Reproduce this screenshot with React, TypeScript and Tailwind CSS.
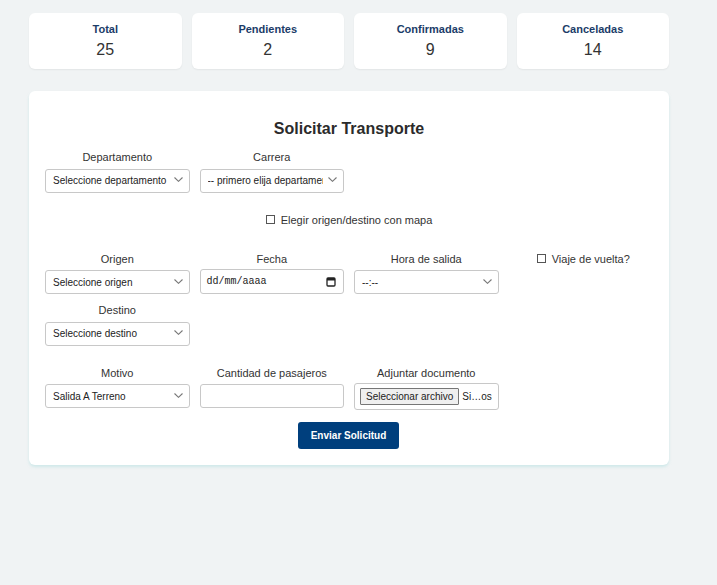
import React from 'react';

const stats = [
  { label: 'Total', value: 25 },
  { label: 'Pendientes', value: 2 },
  { label: 'Confirmadas', value: 9 },
  { label: 'Canceladas', value: 14 },
];

const fieldBox =
  'w-full h-[24px] border border-[#c8c8c8] rounded-[3px] bg-white text-[10px] text-[#222] pl-[7px]';

function Label({ children }: { children: React.ReactNode }) {
  return <div className="text-center text-[11px] leading-[14px] text-[#333] mb-[3px]">{children}</div>;
}

function Select({ value }: { value: string }) {
  return (
    <div className="relative">
      <select className={fieldBox + ' appearance-none pr-[20px]'} defaultValue={value}>
        <option>{value}</option>
      </select>
      <svg
        className="absolute right-[7px] top-[10px] pointer-events-none"
        width="9"
        height="5"
        viewBox="0 0 9 5"
        fill="none"
      >
        <path d="M0.5 0.5L4.5 4.3L8.5 0.5" stroke="#777" strokeWidth="1.1" />
      </svg>
    </div>
  );
}

function Check({ text }: { text: string }) {
  return (
    <label className="flex items-center justify-center gap-[6px] text-[11px] leading-[14px] text-[#333]">
      <span className="w-[9px] h-[9px] border border-[#555] bg-white" />
      <span>{text}</span>
    </label>
  );
}

export default function App() {
  return (
    <div className="min-h-screen bg-[#f0f3f4] pt-[13px] font-['Liberation_Sans',Arial,sans-serif]">
      <div className="ml-[29px] w-[640px]">
        <div className="grid grid-cols-4 gap-[10px]">
          {stats.map((s) => (
            <div
              key={s.label}
              className="h-[56px] bg-white rounded-[6px] shadow-[0_1px_2px_rgba(0,0,0,0.06)] flex flex-col items-center pt-[9px]"
            >
              <div className="text-[11px] leading-[14px] font-bold text-[#1b3c68]">{s.label}</div>
              <div className="text-[16px] leading-[20px] text-[#333] mt-[4px]">{s.value}</div>
            </div>
          ))}
        </div>

        <div className="mt-[22px] bg-white rounded-[6px] shadow-[0_2px_3px_rgba(150,215,215,0.35)] px-[16px] pt-[28px] pb-[16px]">
          <h2 className="text-center text-[16px] leading-[20px] font-bold text-[#2b2b2b]">Solicitar Transporte</h2>

          <div className="grid grid-cols-4 gap-x-[10px] mt-[11px]">
            <div>
              <Label>Departamento</Label>
              <Select value="Seleccione departamento" />
            </div>
            <div>
              <Label>Carrera</Label>
              <Select value="-- primero elija departamento --" />
            </div>
          </div>

          <div className="mt-[20px]">
            <Check text="Elegir origen/destino con mapa" />
          </div>

          <div className="grid grid-cols-4 gap-x-[10px] mt-[25px] items-start">
            <div>
              <Label>Origen</Label>
              <Select value="Seleccione origen" />
              <div className="mt-[9px]">
                <Label>Destino</Label>
                <Select value="Seleccione destino" />
              </div>
            </div>
            <div>
              <Label>Fecha</Label>
              <div className="h-[25px] border border-[#c8c8c8] rounded-[3px] bg-white flex items-center justify-between pl-[6px] pr-[7px]">
                <span className="font-['Liberation_Mono',monospace] text-[10px] text-[#222]">dd/mm/aaaa</span>
                <svg width="10" height="11" viewBox="0 0 10 11" fill="none">
                  <rect x="1" y="2" width="8" height="8" rx="1" stroke="#222" strokeWidth="1.3" />
                  <rect x="1" y="2" width="8" height="2.5" fill="#222" />
                </svg>
              </div>
            </div>
            <div>
              <Label>Hora de salida</Label>
              <Select value="--:--" />
            </div>
            <div className="pl-[5px]">
              <Check text="Viaje de vuelta?" />
            </div>
          </div>

          <div className="grid grid-cols-4 gap-x-[10px] mt-[20px] items-start">
            <div>
              <Label>Motivo</Label>
              <Select value="Salida A Terreno" />
            </div>
            <div>
              <Label>Cantidad de pasajeros</Label>
              <input className={fieldBox} type="text" />
            </div>
            <div>
              <Label>Adjuntar documento</Label>
              <div className="h-[27px] border border-[#c8c8c8] rounded-[3px] bg-white flex items-center pl-[5px] text-[10px] text-[#222] whitespace-nowrap overflow-hidden">
                <span className="border border-[#767676] bg-[#efefef] px-[5px] h-[17px] leading-[15px] rounded-[1px]">
                  Seleccionar archivo
                </span>
                <span className="ml-[3px]">Si…os</span>
              </div>
            </div>
          </div>

          <div className="flex justify-center mt-[12px]">
            <button className="h-[27px] w-[101px] bg-[#003f7d] text-white text-[10px] font-bold rounded-[3px] -ml-[1px]">
              Enviar Solicitud
            </button>
          </div>
        </div>
      </div>
    </div>
  );
}
